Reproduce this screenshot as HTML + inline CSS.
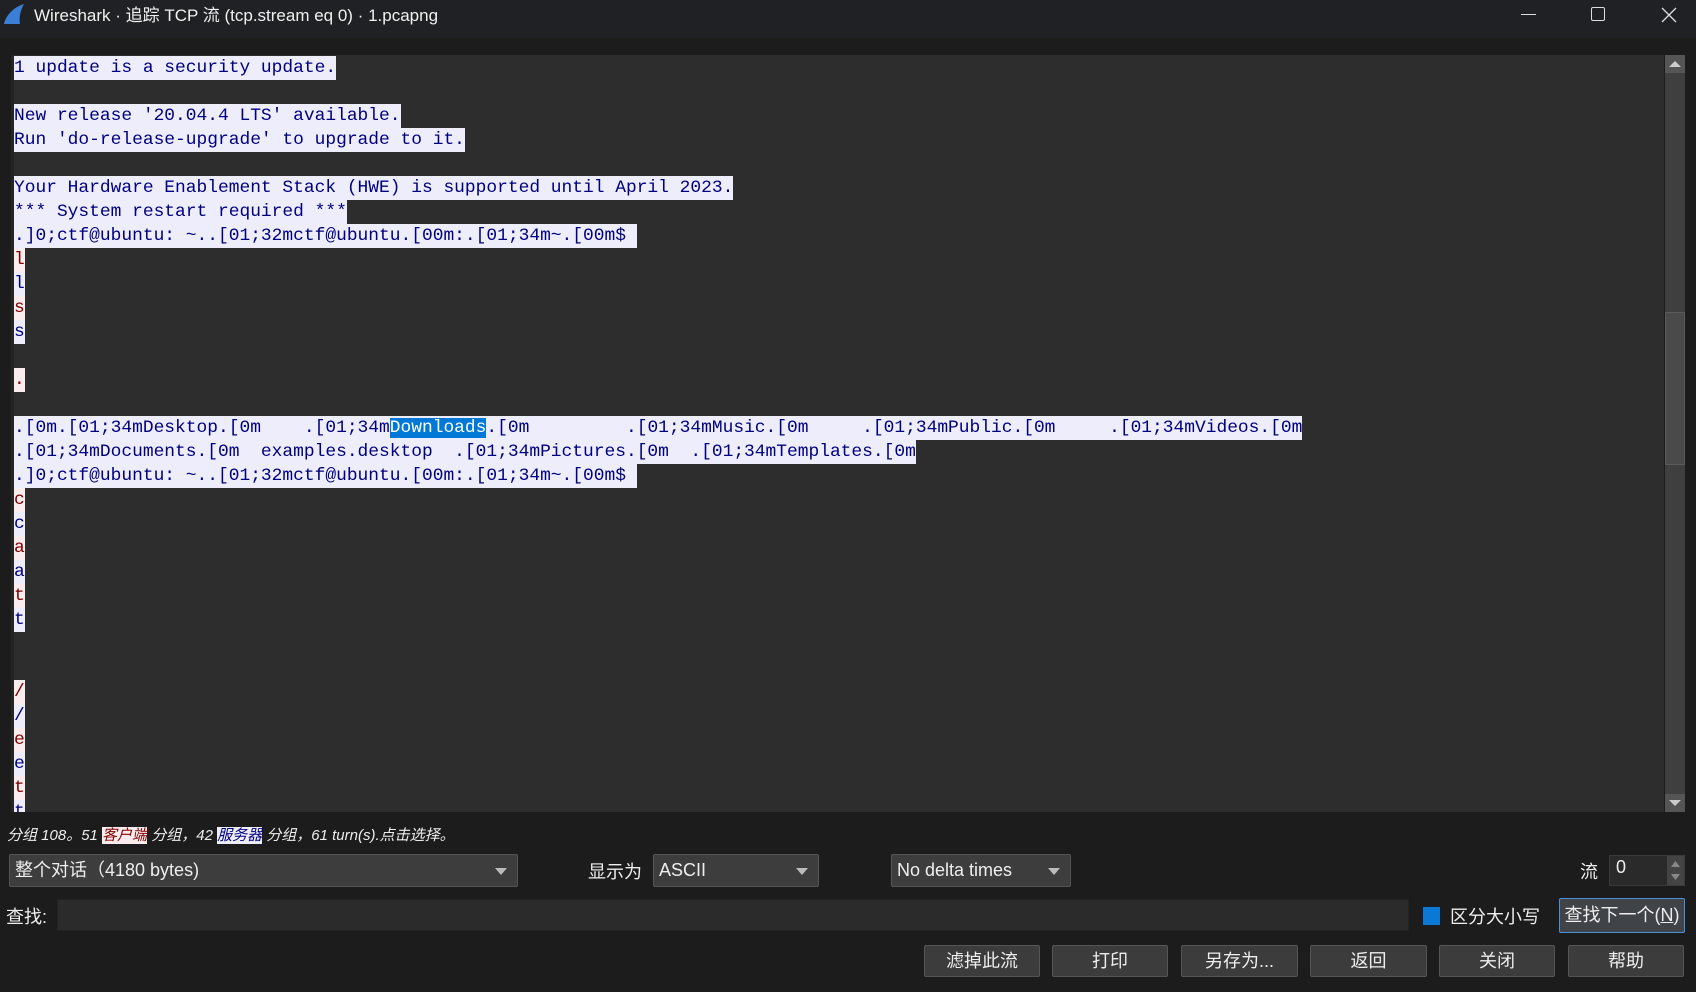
<!DOCTYPE html>
<html><head><meta charset="utf-8"><style>
*{margin:0;padding:0;box-sizing:border-box}
body{width:1696px;height:992px;background:#1c1c1c;overflow:hidden;position:relative;font-family:"Liberation Sans","Noto Sans CJK SC",sans-serif;color:#e8e8e8}
.tb{position:absolute;left:0;top:0;width:1696px;height:38px;background:#1f2124}
.tt{position:absolute;left:34px;top:1px;font-size:17px;color:#f0f0f0}
.txt{position:absolute;left:11px;top:55px;width:1653px;height:757px;background:#2d2d2d;overflow:hidden;border-left:3px solid #252525}
.ln{position:absolute;left:14px;height:24px;line-height:24px;font-family:"Liberation Mono",monospace;font-size:17.9px;white-space:pre}
.s{background:#ededfb;color:#00007f}
.c{background:#fbeded;color:#7f0000}
.sel{background:#0078d7;color:#fff}
.sb{position:absolute;left:1665px;top:55px;width:20px;height:757px;background:#3f3f3f}
.thumb{position:absolute;left:1665px;top:312px;width:20px;height:153px;background:#4a4a4a;border:1px solid #5a5a5a}
.ab{position:absolute;left:1665px;width:20px;height:18px;background:#505050}
.ui{position:absolute;font-size:18px;color:#eee;white-space:nowrap}
.combo{position:absolute;height:33px;background:#3d3d3d;border:1px solid #555;border-radius:2px;font-size:18px;line-height:30px;padding-left:5px;color:#eee}
.combo:after{content:"";position:absolute;right:10px;top:13px;border-left:6px solid transparent;border-right:6px solid transparent;border-top:7px solid #bbb}
.btn{position:absolute;top:945px;height:32px;background:#3c3c3c;border:1px solid #555;border-radius:2px;text-align:center;line-height:30px;font-size:18px;color:#eee}
</style></head><body>
<div class="tb"></div>
<svg style="position:absolute;left:2px;top:3px" width="24" height="22"><path d="M2 21 C4 12 12 4 22 1 C18 8 17 15 18 21 Z" fill="#3a7fd5"/></svg>
<div class="tt">Wireshark · 追踪 TCP 流 (tcp.stream eq 0) · 1.pcapng</div>
<div style="position:absolute;left:1521px;top:14px;width:15px;height:1px;background:#ddd"></div>
<div style="position:absolute;left:1591px;top:7px;width:14px;height:14px;border:1.5px solid #ddd;border-radius:2px"></div>
<svg style="position:absolute;left:1661px;top:7px" width="16" height="16"><path d="M1 1L15 15M15 1L1 15" stroke="#ddd" stroke-width="1.3"/></svg>

<div class="txt"></div>
<div style="position:absolute;left:0;top:1px">
<div class="ln s" style="top:55px">1 update is a security update.</div>
<div class="ln s" style="top:103px">New release '20.04.4 LTS' available.</div>
<div class="ln s" style="top:127px">Run 'do-release-upgrade' to upgrade to it.</div>
<div class="ln s" style="top:175px">Your Hardware Enablement Stack (HWE) is supported until April 2023.</div>
<div class="ln s" style="top:199px">*** System restart required ***</div>
<div class="ln s" style="top:223px">.]0;ctf@ubuntu: ~..[01;32mctf@ubuntu.[00m:.[01;34m~.[00m$ </div>
<div class="ln c" style="top:247px">l</div>
<div class="ln s" style="top:271px">l</div>
<div class="ln c" style="top:295px">s</div>
<div class="ln s" style="top:319px">s</div>
<div class="ln c" style="top:367px">.</div>
<div class="ln s" style="top:415px">.[0m.[01;34mDesktop.[0m    .[01;34m<span class="sel">Downloads</span>.[0m         .[01;34mMusic.[0m     .[01;34mPublic.[0m     .[01;34mVideos.[0m</div>
<div class="ln s" style="top:439px">.[01;34mDocuments.[0m  examples.desktop  .[01;34mPictures.[0m  .[01;34mTemplates.[0m</div>
<div class="ln s" style="top:463px">.]0;ctf@ubuntu: ~..[01;32mctf@ubuntu.[00m:.[01;34m~.[00m$ </div>
<div class="ln c" style="top:487px">c</div>
<div class="ln s" style="top:511px">c</div>
<div class="ln c" style="top:535px">a</div>
<div class="ln s" style="top:559px">a</div>
<div class="ln c" style="top:583px">t</div>
<div class="ln s" style="top:607px">t</div>
<div class="ln c" style="top:679px">/</div>
<div class="ln s" style="top:703px">/</div>
<div class="ln c" style="top:727px">e</div>
<div class="ln s" style="top:751px">e</div>
<div class="ln c" style="top:775px">t</div>
<div class="ln s" style="top:799px;height:12px;overflow:hidden">t</div>
</div>
<div class="sb"></div>
<div class="thumb"></div>
<div class="ab" style="top:55px;background:#555"><svg width="20" height="18"><path d="M4 12L10 6L16 12Z" fill="#ccc"/></svg></div>
<div class="ab" style="top:794px;background:#555"><svg width="20" height="18"><path d="M4 6L10 12L16 6Z" fill="#ccc"/></svg></div>

<div class="ui" style="left:7px;top:824px;font-size:15px;font-style:italic">分组 108。51 <span style="background:#fbeded;color:#7f0000">客户端</span> 分组，42 <span style="background:#ededfb;color:#00007f">服务器</span> 分组，61 turn(s).点击选择。</div>

<div class="combo" style="left:9px;top:854px;width:509px">整个对话（4180 bytes)</div>
<div class="ui" style="left:588px;top:858px">显示为</div>
<div class="combo" style="left:653px;top:854px;width:166px">ASCII</div>
<div class="combo" style="left:891px;top:854px;width:180px">No delta times</div>
<div class="ui" style="left:1580px;top:858px">流</div>
<div style="position:absolute;left:1609px;top:855px;width:76px;height:31px;background:#2a2a2a;border:1px solid #3a3a3a"></div>
<div class="ui" style="left:1616px;top:857px">0</div>
<div style="position:absolute;left:1667px;top:856px;width:17px;height:29px;background:#444"></div>
<svg style="position:absolute;left:1667px;top:856px" width="17" height="29"><path d="M4 11L8.5 5L13 11Z M4 18L8.5 24L13 18Z" fill="#888"/></svg>

<div class="ui" style="left:6px;top:903px">查找:</div>
<div style="position:absolute;left:57px;top:899px;width:1352px;height:32px;background:#2b2b2b;border:1px solid #222"></div>
<div style="position:absolute;left:1423px;top:907px;width:17px;height:18px;background:#0a78d4"></div>
<div class="ui" style="left:1450px;top:903px">区分大小写</div>
<div class="btn" style="left:1559px;top:898px;width:126px;height:35px;border:1px solid #4a90d9;background:#404348;line-height:33px">查找下一个(<u>N</u>)</div>

<div class="btn" style="left:924px;width:116px">滤掉此流</div>
<div class="btn" style="left:1052px;width:116px">打印</div>
<div class="btn" style="left:1181px;width:117px">另存为...</div>
<div class="btn" style="left:1310px;width:117px">返回</div>
<div class="btn" style="left:1439px;width:116px">关闭</div>
<div class="btn" style="left:1568px;width:116px">帮助</div>
</body></html>
